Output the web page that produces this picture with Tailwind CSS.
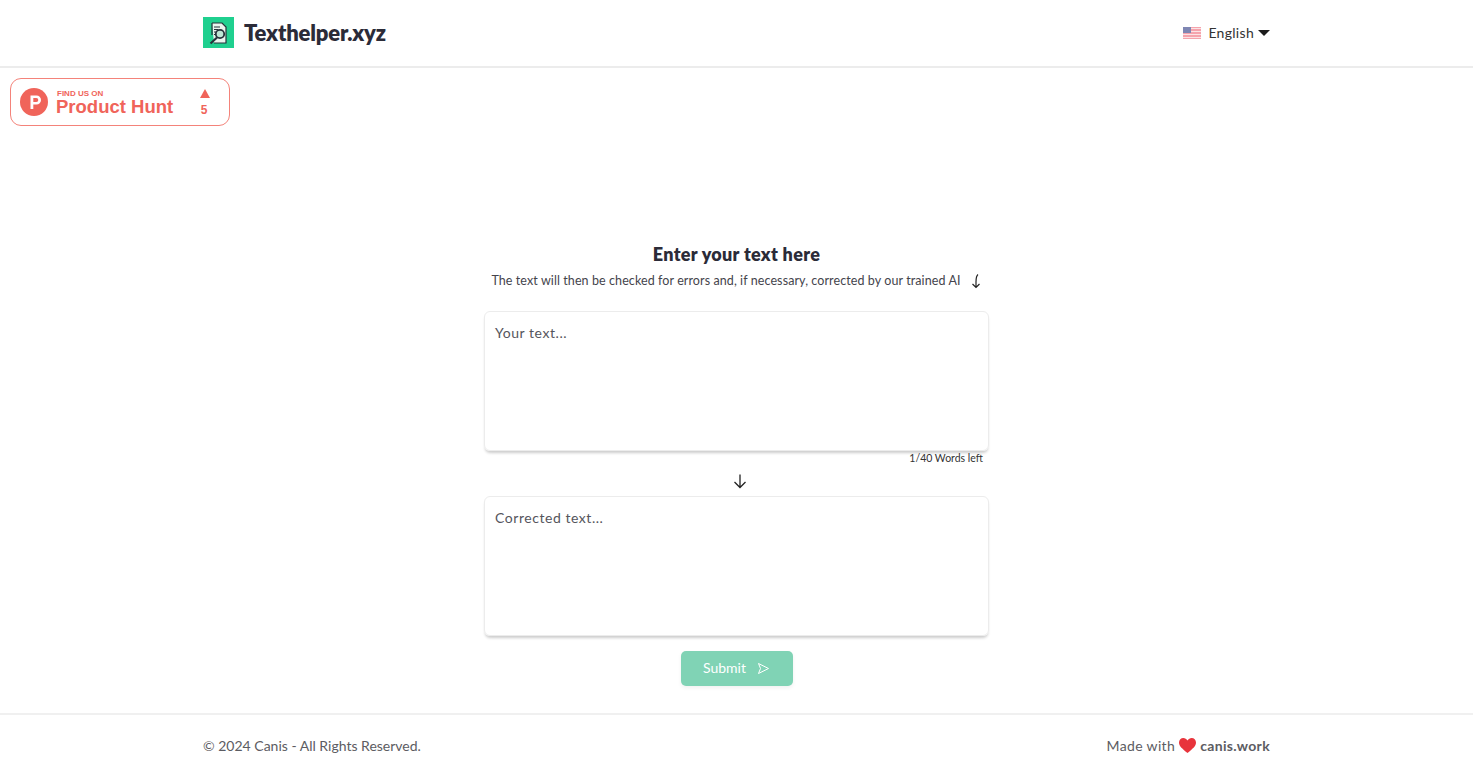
<!DOCTYPE html>
<html lang="en">
<head>
  <meta charset="UTF-8">
  <title>Texthelper.xyz</title>
  <script src="https://cdn.jsdelivr.net/npm/@tailwindcss/browser@4"></script>
</head>
<body class="bg-white h-[768px] overflow-hidden flex flex-col font-['Lato',sans-serif] text-[#2c2c36]">
<!-- Header -->
<header class="h-[68px] shrink-0 border-b-2 border-[#ececec] flex items-center justify-between px-[203px]">
  <div class="flex items-center gap-[10px] -mt-[1px]">
    <div class="w-[31px] h-[31px] bg-[#1fd08f] flex items-center justify-center">
      <svg width="26" height="26" viewBox="0 0 26 26" fill="none">
        <path d="M6 3h10l4 4v16H8" fill="#e9f5ee" stroke="#26323a" stroke-width="1.200"/>
        <path d="M6 3v12" stroke="#26323a" stroke-width="1.200"/>
        <path d="M8 7h6M8 9.500h4M8 12h3M8 14.500h2" stroke="#26323a" stroke-width="1"/>
        <circle cx="14" cy="14" r="4.200" fill="#bfe8d6" stroke="#26323a" stroke-width="1.800"/>
        <path d="M11 17.500l-6.500 6" stroke="#26323a" stroke-width="2.200"/>
      </svg>
    </div>
    <span class="text-[22px] font-extrabold tracking-[-0.18px] text-[#2b2b38]">Texthelper.xyz</span>
  </div>
  <div class="flex items-center">
    <svg width="18" height="12" viewBox="0 0 18 12" class="mr-[7px]">
      <rect width="18" height="12" fill="#f5a3ac"/>
      <path d="M0 1.500h18M0 4.500h18M0 7.500h18M0 10.500h18" stroke="#fbe3e5" stroke-width="1"/>
      <rect width="8" height="6" fill="#7f86b3"/>
    </svg>
    <span class="text-sm tracking-[0.3px] text-[#333]">English</span>
    <svg width="12" height="6" viewBox="0 0 12 6" class="ml-1"><path d="M0 0h12L6 6z" fill="#1c1c1c"/></svg>
  </div>
</header>

<!-- Product Hunt badge -->
<div class="pl-[10px] pt-[10px] h-[162px] shrink-0">
  <div class="w-[220px] h-[48px] rounded-[11px] border-[1.5px] border-[#f4837a] flex items-center pl-[9px] font-['Liberation_Sans',sans-serif] text-[#f0645a]">
    <svg width="28" height="28" viewBox="0 0 28 28"><circle cx="14" cy="14" r="14" fill="#f0645a"/><path d="M10.500 21V7.500h6a4.500 4.500 0 0 1 0 9h-3.200V21z M13.300 10v4h3a2 2 0 0 0 0-4z" fill="#fff" fill-rule="evenodd"/></svg>
    <div class="ml-[8px] w-[134px] -mt-[1px]">
      <div class="text-[8px] font-bold leading-[10px] ml-[1px]">FIND US ON</div>
      <div class="text-[18.500px] font-bold leading-[16px]">Product Hunt</div>
    </div>
    <div class="flex flex-col items-center w-[30px] mt-[3px]">
      <svg width="10" height="9" viewBox="0 0 10 9"><path d="M5 0l5 9H0z" fill="#f0645a"/></svg>
      <span class="text-[12px] font-bold leading-[15px] mt-[5px] mr-[2px]">5</span>
    </div>
  </div>
</div>

<!-- Main -->
<main class="flex-1 flex flex-col items-center">
  <h1 class="text-[18px] font-extrabold tracking-[0.3px] leading-[24px] mt-[12px] text-[#2b2b38]">Enter your text here</h1>
  <div class="flex items-center mt-[4px] h-[22px] text-[12.500px] tracking-[0.09px] text-[#44444c]">
    <span>The text will then be checked for errors and, if necessary, corrected by our trained AI</span>
    <svg width="12" height="16" viewBox="0 0 12 16" fill="none" class="ml-[9px]"><path d="M8 1.500C6 3 6 6 6 9v5.500M2.500 11l3.500 3.500L9.500 11" stroke="#222" stroke-width="1.200"/></svg>
  </div>
  <div class="w-[505px] h-[140px] mt-[19px] rounded-[6px] border border-[#ececec] shadow-[0_3px_3px_-1px_rgba(0,0,0,0.2)] px-[10px] pt-[11px] text-sm tracking-[0.55px] text-[#55555c]">Your text...</div>
  <div class="w-[505px] text-right pr-[6px] text-[10.500px] leading-[14px] text-[#333]">1/40 Words left</div>
  <svg width="16" height="16" viewBox="0 0 16 16" fill="none" class="mt-[8px] ml-[7px]"><path d="M8 1.500v13M2.500 9L8 14.500 13.500 9" stroke="#222" stroke-width="1.300"/></svg>
  <div class="w-[505px] h-[140px] mt-[7px] rounded-[6px] border border-[#ececec] shadow-[0_3px_3px_-1px_rgba(0,0,0,0.2)] px-[10px] pt-[11px] text-sm tracking-[0.55px] text-[#55555c]">Corrected text...</div>
  <button class="w-[112px] h-[35px] mt-[15px] pb-[1px] rounded-[5px] bg-[#80d3b5] text-white text-sm flex items-center justify-center gap-[11px] shadow-[0_2px_4px_rgba(0,0,0,0.06)]">
    Submit
    <svg width="13" height="13" viewBox="0 0 13 13" fill="none"><path d="M1.500 1.500l10 5-10 5 2-5z" stroke="#fff" stroke-width="1" stroke-linejoin="round"/></svg>
  </button>
</main>

<!-- Footer -->
<footer class="h-[55px] shrink-0 border-t-2 border-[#f0f0f0] pt-[8px] flex items-center justify-between px-[203px] text-sm text-[#5c5c62]">
  <span>© 2024 Canis - All Rights Reserved.</span>
  <span class="flex items-center tracking-[0.35px]">Made with
    <svg width="17" height="15" viewBox="0 0 17 15" class="mx-[4px]"><path d="M8.500 15C3 10.500 0 8 0 4.500 0 2 2 0 4.300 0c1.700 0 3.300 1 4.200 2.500C9.400 1 11 0 12.700 0 15 0 17 2 17 4.500 17 8 14 10.500 8.500 15z" fill="#e8343c"/></svg>
    <span class="font-bold">canis.work</span>
  </span>
</footer>
</body>
</html>
